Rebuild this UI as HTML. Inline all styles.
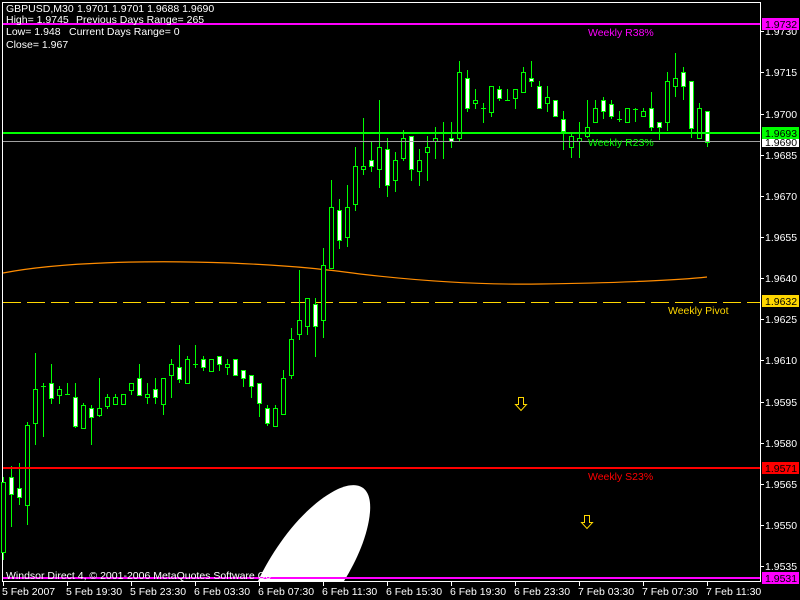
<!DOCTYPE html>
<html><head><meta charset="utf-8"><style>
html,body{margin:0;padding:0;background:#000;width:800px;height:600px;overflow:hidden}
svg{display:block}
text{font-family:"Liberation Sans",sans-serif;font-size:10.5px}
</style></head><body>
<svg width="800" height="600" viewBox="0 0 800 600" shape-rendering="crispEdges">
<rect width="800" height="600" fill="#000"/>
<path d="M2.5 2.5H760.5V581.5H2.5Z" fill="none" stroke="#fff"/>
<path d="M3 273 C60 262 150 260 230 263 C300 266 330 270 360 274 C420 281 480 285 540 284 C620 283 680 280 707 277" fill="none" stroke="#ff8c00" stroke-width="1.2" shape-rendering="auto"/>
<line x1="3" y1="302.5" x2="760" y2="302.5" stroke="#ffd700" stroke-dasharray="18 6"/>
<g stroke="#00ff00" stroke-width="1">
<path d="M3.5 477V560M11.5 466V527M19.5 463V505M27.5 422V525M35.5 353V445M43.5 383V437M51.5 364V404M59.5 386V404M67.5 383V395M75.5 383V428M83.5 403V428M91.5 405V445M99.5 378V417M107.5 394V409M115.5 394V404M123.5 394V404M131.5 383V395M139.5 364V395M147.5 383V404M155.5 378V404M163.5 378V415M171.5 359V398M179.5 345V383M187.5 356V384M195.5 345V368M203.5 356V371M211.5 359V371M219.5 356V371M227.5 359V375M235.5 359V375M243.5 370V387M251.5 375V398M259.5 383V417M267.5 405V426M275.5 405V426M283.5 370V414M291.5 328V379M299.5 270V340M307.5 298V335M315.5 298V357M323.5 248V338M331.5 180V268M339.5 199V249M347.5 185V247M355.5 147V211M363.5 118V175M371.5 142V172M379.5 100V188M387.5 138V197M395.5 152V192M403.5 130V161M411.5 136V181M419.5 149V186M427.5 136V181M435.5 127V159M443.5 122V159M451.5 122V148M459.5 61V141M467.5 70V112M475.5 89V109M483.5 103V123M491.5 86V117M499.5 86V101M507.5 89V100M515.5 89V109M523.5 67V92M531.5 61V87M539.5 81V108M547.5 86V112M555.5 100V116M563.5 111V150M571.5 133V158M579.5 122V158M587.5 100V138M595.5 100V122M603.5 97V119M611.5 100V119M619.5 111V122M627.5 108V122M635.5 108V122M643.5 108V116M651.5 92V131M659.5 122V140M667.5 72V131M675.5 53V97M683.5 67V100M691.5 81V138M699.5 103V138M707.5 111V147"/>
<path d="M41 386.5H46M65 394.5H70M193 364.5H198M441 141.5H446M481 108.5H486M505 100.5H510M617 119.5H622M633 109.5H638"/>
</g>
<g stroke="#00ff00" stroke-width="1">
<rect x="1.5" y="482.5" width="4" height="70" fill="#000"/>
<rect x="9.5" y="477.5" width="4" height="17" fill="#fff"/>
<rect x="17.5" y="488.5" width="4" height="9" fill="#fff"/>
<rect x="25.5" y="425.5" width="4" height="80" fill="#000"/>
<rect x="33.5" y="389.5" width="4" height="34" fill="#000"/>
<rect x="49.5" y="383.5" width="4" height="15" fill="#fff"/>
<rect x="57.5" y="389.5" width="4" height="6" fill="#000"/>
<rect x="73.5" y="397.5" width="4" height="29" fill="#fff"/>
<rect x="81.5" y="405.5" width="4" height="23" fill="#000"/>
<rect x="89.5" y="408.5" width="4" height="9" fill="#fff"/>
<rect x="97.5" y="408.5" width="4" height="7" fill="#000"/>
<rect x="105.5" y="397.5" width="4" height="9" fill="#000"/>
<rect x="113.5" y="397.5" width="4" height="7" fill="#000"/>
<rect x="121.5" y="394.5" width="4" height="10" fill="#000"/>
<rect x="129.5" y="383.5" width="4" height="7" fill="#000"/>
<rect x="137.5" y="378.5" width="4" height="17" fill="#fff"/>
<rect x="145.5" y="394.5" width="4" height="3" fill="#000"/>
<rect x="153.5" y="389.5" width="4" height="8" fill="#fff"/>
<rect x="161.5" y="378.5" width="4" height="26" fill="#000"/>
<rect x="169.5" y="364.5" width="4" height="11" fill="#000"/>
<rect x="177.5" y="367.5" width="4" height="12" fill="#fff"/>
<rect x="185.5" y="359.5" width="4" height="24" fill="#000"/>
<rect x="201.5" y="359.5" width="4" height="8" fill="#fff"/>
<rect x="209.5" y="359.5" width="4" height="12" fill="#000"/>
<rect x="217.5" y="356.5" width="4" height="8" fill="#fff"/>
<rect x="225.5" y="364.5" width="4" height="3" fill="#000"/>
<rect x="233.5" y="359.5" width="4" height="16" fill="#fff"/>
<rect x="241.5" y="370.5" width="4" height="8" fill="#fff"/>
<rect x="249.5" y="375.5" width="4" height="11" fill="#fff"/>
<rect x="257.5" y="383.5" width="4" height="20" fill="#fff"/>
<rect x="265.5" y="408.5" width="4" height="15" fill="#fff"/>
<rect x="273.5" y="408.5" width="4" height="18" fill="#000"/>
<rect x="281.5" y="378.5" width="4" height="36" fill="#000"/>
<rect x="289.5" y="339.5" width="4" height="36" fill="#000"/>
<rect x="297.5" y="320.5" width="4" height="14" fill="#000"/>
<rect x="305.5" y="298.5" width="4" height="28" fill="#000"/>
<rect x="313.5" y="304.5" width="4" height="22" fill="#fff"/>
<rect x="321.5" y="265.5" width="4" height="55" fill="#000"/>
<rect x="329.5" y="207.5" width="4" height="61" fill="#000"/>
<rect x="337.5" y="210.5" width="4" height="30" fill="#fff"/>
<rect x="345.5" y="207.5" width="4" height="30" fill="#000"/>
<rect x="353.5" y="166.5" width="4" height="38" fill="#000"/>
<rect x="361.5" y="166.5" width="4" height="3" fill="#000"/>
<rect x="369.5" y="160.5" width="4" height="6" fill="#fff"/>
<rect x="377.5" y="147.5" width="4" height="22" fill="#000"/>
<rect x="385.5" y="149.5" width="4" height="36" fill="#fff"/>
<rect x="393.5" y="160.5" width="4" height="20" fill="#000"/>
<rect x="401.5" y="138.5" width="4" height="20" fill="#000"/>
<rect x="409.5" y="136.5" width="4" height="33" fill="#fff"/>
<rect x="417.5" y="160.5" width="4" height="11" fill="#000"/>
<rect x="425.5" y="147.5" width="4" height="5" fill="#000"/>
<rect x="433.5" y="138.5" width="4" height="3" fill="#000"/>
<rect x="449.5" y="138.5" width="4" height="3" fill="#fff"/>
<rect x="457.5" y="72.5" width="4" height="66" fill="#000"/>
<rect x="465.5" y="78.5" width="4" height="30" fill="#fff"/>
<rect x="473.5" y="100.5" width="4" height="3" fill="#000"/>
<rect x="489.5" y="86.5" width="4" height="26" fill="#000"/>
<rect x="497.5" y="89.5" width="4" height="9" fill="#fff"/>
<rect x="513.5" y="89.5" width="4" height="9" fill="#000"/>
<rect x="521.5" y="72.5" width="4" height="20" fill="#000"/>
<rect x="529.5" y="78.5" width="4" height="3" fill="#fff"/>
<rect x="537.5" y="86.5" width="4" height="22" fill="#fff"/>
<rect x="545.5" y="97.5" width="4" height="6" fill="#000"/>
<rect x="553.5" y="100.5" width="4" height="16" fill="#fff"/>
<rect x="561.5" y="119.5" width="4" height="12" fill="#fff"/>
<rect x="569.5" y="136.5" width="4" height="11" fill="#000"/>
<rect x="577.5" y="138.5" width="4" height="3" fill="#000"/>
<rect x="585.5" y="127.5" width="4" height="9" fill="#000"/>
<rect x="593.5" y="108.5" width="4" height="14" fill="#000"/>
<rect x="601.5" y="100.5" width="4" height="11" fill="#fff"/>
<rect x="609.5" y="104.5" width="4" height="12" fill="#fff"/>
<rect x="625.5" y="108.5" width="4" height="14" fill="#000"/>
<rect x="641.5" y="111.5" width="4" height="5" fill="#000"/>
<rect x="649.5" y="108.5" width="4" height="19" fill="#fff"/>
<rect x="657.5" y="122.5" width="4" height="5" fill="#fff"/>
<rect x="665.5" y="81.5" width="4" height="41" fill="#000"/>
<rect x="673.5" y="78.5" width="4" height="8" fill="#000"/>
<rect x="681.5" y="72.5" width="4" height="14" fill="#fff"/>
<rect x="689.5" y="81.5" width="4" height="47" fill="#fff"/>
<rect x="697.5" y="108.5" width="4" height="30" fill="#000"/>
<rect x="705.5" y="111.5" width="4" height="31" fill="#fff"/>
</g>
<rect x="3" y="23" width="757" height="2" fill="#ff00ff"/>
<rect x="3" y="132" width="757" height="2" fill="#00ff00"/>
<rect x="3" y="141" width="757" height="1" fill="#a0a0a0"/>
<rect x="3" y="467" width="757" height="2" fill="#ff0000"/>
<path d="M258 581 C275 545 305 505 338 489 C358 480 372 486 370 512 C368 535 357 560 344 581 Z" fill="#fff" shape-rendering="auto"/>
<rect x="3" y="577" width="757" height="2" fill="#ff00ff"/>
<text x="588" y="36" fill="#ff00ff" font-size="11.5">Weekly R38%</text>
<text x="588" y="146" fill="#00ff00" font-size="11.5">Weekly R23%</text>
<text x="668" y="314" fill="#ffd700" font-size="11.5">Weekly Pivot</text>
<text x="588" y="480" fill="#ff0000" font-size="11.5">Weekly S23%</text>
<path d="M518.5 397.5H523.5V404.5H526.5L521 410.5L515.5 404.5H518.5Z" fill="none" stroke="#ffd700" shape-rendering="auto"/>
<path d="M584.5 515.5H589.5V522.5H592.5L587 528.5L581.5 522.5H584.5Z" fill="none" stroke="#ffd700" shape-rendering="auto"/>
<g fill="#fff">
<text x="6" y="12">GBPUSD,M30</text><text x="77" y="12">1.9701 1.9701 1.9688 1.9690</text>
<text x="6" y="23">High= 1.9745</text><text x="76" y="23">Previous Days Range= 265</text>
<text x="6" y="35">Low= 1.948</text><text x="69" y="35">Current Days Range= 0</text>
<text x="6" y="48">Close= 1.967</text>
<text x="6" y="579">Windsor Direct 4, © 2001-2006 MetaQuotes Software Co</text>
</g>
<g stroke="#fff"><path d="M760 31.5H764M760 72.5H764M760 114.5H764M760 155.5H764M760 196.5H764M760 237.5H764M760 278.5H764M760 319.5H764M760 360.5H764M760 402.5H764M760 443.5H764M760 484.5H764M760 525.5H764M760 566.5H764"/>
<path d="M3.5 581V586M67.5 581V586M131.5 581V586M195.5 581V586M259.5 581V586M323.5 581V586M387.5 581V586M451.5 581V586M515.5 581V586M579.5 581V586M643.5 581V586M707.5 581V586"/></g>
<g fill="#fff">
<text x="765" y="35">1.9730</text><text x="765" y="76">1.9715</text><text x="765" y="118">1.9700</text>
<text x="765" y="159">1.9685</text><text x="765" y="200">1.9670</text><text x="765" y="241">1.9655</text>
<text x="765" y="282">1.9640</text><text x="765" y="323">1.9625</text><text x="765" y="364">1.9610</text>
<text x="765" y="406">1.9595</text><text x="765" y="447">1.9580</text><text x="765" y="488">1.9565</text>
<text x="765" y="529">1.9550</text><text x="765" y="570">1.9535</text>
</g>
<rect x="762" y="18" width="37" height="12" fill="#ff00ff"/><text x="765" y="28" fill="#000">1.9732</text>
<rect x="762" y="137" width="37" height="10" fill="#fff"/><text x="765" y="146" fill="#000">1.9690</text>
<rect x="762" y="127" width="37" height="12" fill="#00ff00"/><text x="765" y="137" fill="#000">1.9693</text>
<rect x="762" y="295" width="37" height="12" fill="#ffd700"/><text x="765" y="305" fill="#000">1.9632</text>
<rect x="762" y="462" width="37" height="12" fill="#ff0000"/><text x="765" y="472" fill="#000">1.9571</text>
<rect x="762" y="572" width="37" height="12" fill="#ff00ff"/><text x="765" y="582" fill="#000">1.9531</text>
<g fill="#fff">
<text x="2" y="595">5 Feb 2007</text><text x="66" y="595">5 Feb 19:30</text><text x="130" y="595">5 Feb 23:30</text>
<text x="194" y="595">6 Feb 03:30</text><text x="258" y="595">6 Feb 07:30</text><text x="322" y="595">6 Feb 11:30</text>
<text x="386" y="595">6 Feb 15:30</text><text x="450" y="595">6 Feb 19:30</text><text x="514" y="595">6 Feb 23:30</text>
<text x="578" y="595">7 Feb 03:30</text><text x="642" y="595">7 Feb 07:30</text><text x="706" y="595">7 Feb 11:30</text>
</g>
</svg>
</body></html>
